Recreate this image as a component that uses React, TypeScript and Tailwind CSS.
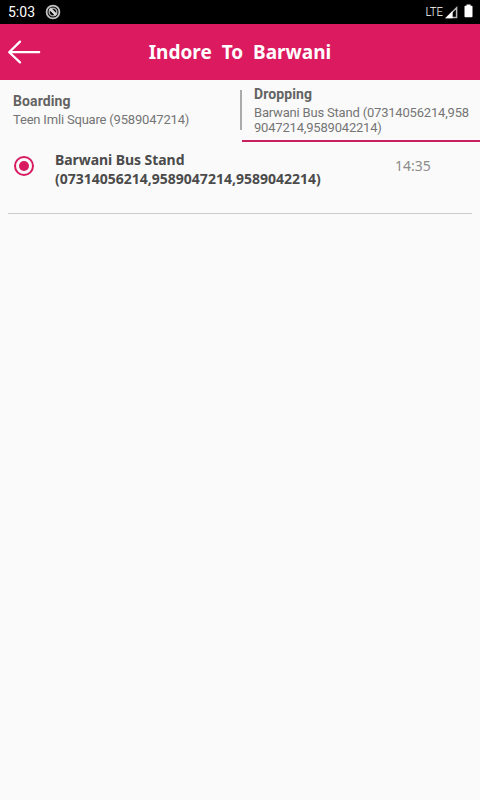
import type { ReactNode } from "react";

type Stop = {
  name: string;
  phones: string;
  time: string;
};

const STOPS: Stop[] = [
  {
    name: "Barwani Bus Stand",
    phones: "(07314056214,9589047214,9589042214)",
    time: "14:35",
  },
];

export default function App() {
  return (
    <div className="flex h-screen w-full flex-col overflow-hidden bg-[#fafafa] font-['Roboto',sans-serif]">
      <StatusBar />
      <Header />

      {/* Boarding / Dropping tabs */}
      <div className="flex h-[62px]">
        <div className="w-[240px] pt-[13px] pl-[13px]">
          <TabText title="Boarding">Teen Imli Square (9589047214)</TabText>
        </div>
        <div className="mt-[10px] h-10 w-[2px] bg-[#aaaaaa]" />
        <div className="flex-1 border-b-2 border-[#c92060] pt-[6px] pl-3">
          <TabText title="Dropping">
            Barwani Bus Stand (07314056214,958
            <br />
            9047214,9589042214)
          </TabText>
        </div>
      </div>

      <div className="px-2">
        {STOPS.map((stop) => (
          <StopRow key={stop.name} stop={stop} />
        ))}
      </div>
    </div>
  );
}

function StatusBar() {
  return (
    <div className="flex h-6 shrink-0 items-center bg-black text-white">
      <span className="pl-2 text-[14px] leading-6">5:03</span>
      <svg className="ml-[10px]" width="16" height="16" viewBox="0 0 16 16" fill="none">
        <circle cx="8" cy="8" r="6.4" stroke="#c4c4c4" strokeWidth="1.8" />
        <circle cx="8" cy="8" r="3.8" stroke="#a8a8a8" strokeWidth="1.6" />
        <path d="M4.8 4.6l6.4 6.4" stroke="#d8d8d8" strokeWidth="2.8" />
        <path d="M5.3 8.2l2.6 2.7" stroke="#000" strokeWidth="1.4" />
      </svg>
      <span className="ml-auto origin-right scale-x-[0.87] text-[13px] leading-6 font-light tracking-[-0.2px]">
        LTE
      </span>
      <svg className="ml-[2px]" width="13" height="13" viewBox="0 0 13 13">
        <path d="M11.6 1.8V11.5H1.8z" fill="none" stroke="#b8b8b8" strokeWidth="1.5" />
        <path d="M0.4 12.3L7.6 5.1v7.2z" fill="#fff" />
      </svg>
      <svg className="mr-[7px] mb-[2px] ml-[6px]" width="9" height="14" viewBox="0 0 9 14">
        <path d="M2.5 0.5h4v1.3h1.3q.7 0 .7.7v10q0 .8-.8.8H1.3q-.8 0-.8-.8v-10q0-.7.7-.7h1.3z" fill="#fff" />
      </svg>
    </div>
  );
}

function Header() {
  return (
    <div className="grid h-14 shrink-0 grid-cols-[48px_1fr_48px] items-center bg-[#dc1a5f]">
      <svg
        className="ml-2"
        width="33"
        height="24"
        viewBox="0 0 33 24"
        fill="none"
        stroke="#fff"
        strokeWidth="2.2"
        strokeLinecap="round"
        strokeLinejoin="round"
      >
        <path d="M31.2 12.2H1.2M12 1.6L1.2 12.2L12 22.4" />
      </svg>
      <h1 className="text-center font-['Noto_Sans',sans-serif] text-[19px] leading-6 font-bold whitespace-pre text-white">
        {"Indore  To  Barwani"}
      </h1>
    </div>
  );
}

function TabText({ title, children }: { title: string; children: ReactNode }) {
  return (
    <>
      <p className="text-[14px] leading-4 font-bold tracking-[0.1px] text-[#636363]">{title}</p>
      <p className="mt-[3px] text-[13px] leading-[15px] tracking-[-0.19px] whitespace-nowrap text-[#757575]">
        {children}
      </p>
    </>
  );
}

function StopRow({ stop }: { stop: Stop }) {
  return (
    <div className="flex h-[72px] border-b border-[#cccccc] pt-2 font-['Noto_Sans',sans-serif]">
      <svg className="mt-[5px] ml-[5px] shrink-0" width="22" height="22" viewBox="0 0 22 22">
        <circle cx="11" cy="11" r="9" fill="none" stroke="#d81b60" strokeWidth="2" />
        <circle cx="11" cy="11" r="5" fill="#d81b60" />
      </svg>
      <div className="ml-5 w-[340px] text-[14px] leading-[19px] font-bold text-[#4b4b4b]">
        <p className="tracking-[-0.06px]">{stop.name}</p>
        <p>{stop.phones}</p>
      </div>
      <span className="mt-[6px] text-[14px] leading-[19px] text-[#8b8b8b]">{stop.time}</span>
    </div>
  );
}
